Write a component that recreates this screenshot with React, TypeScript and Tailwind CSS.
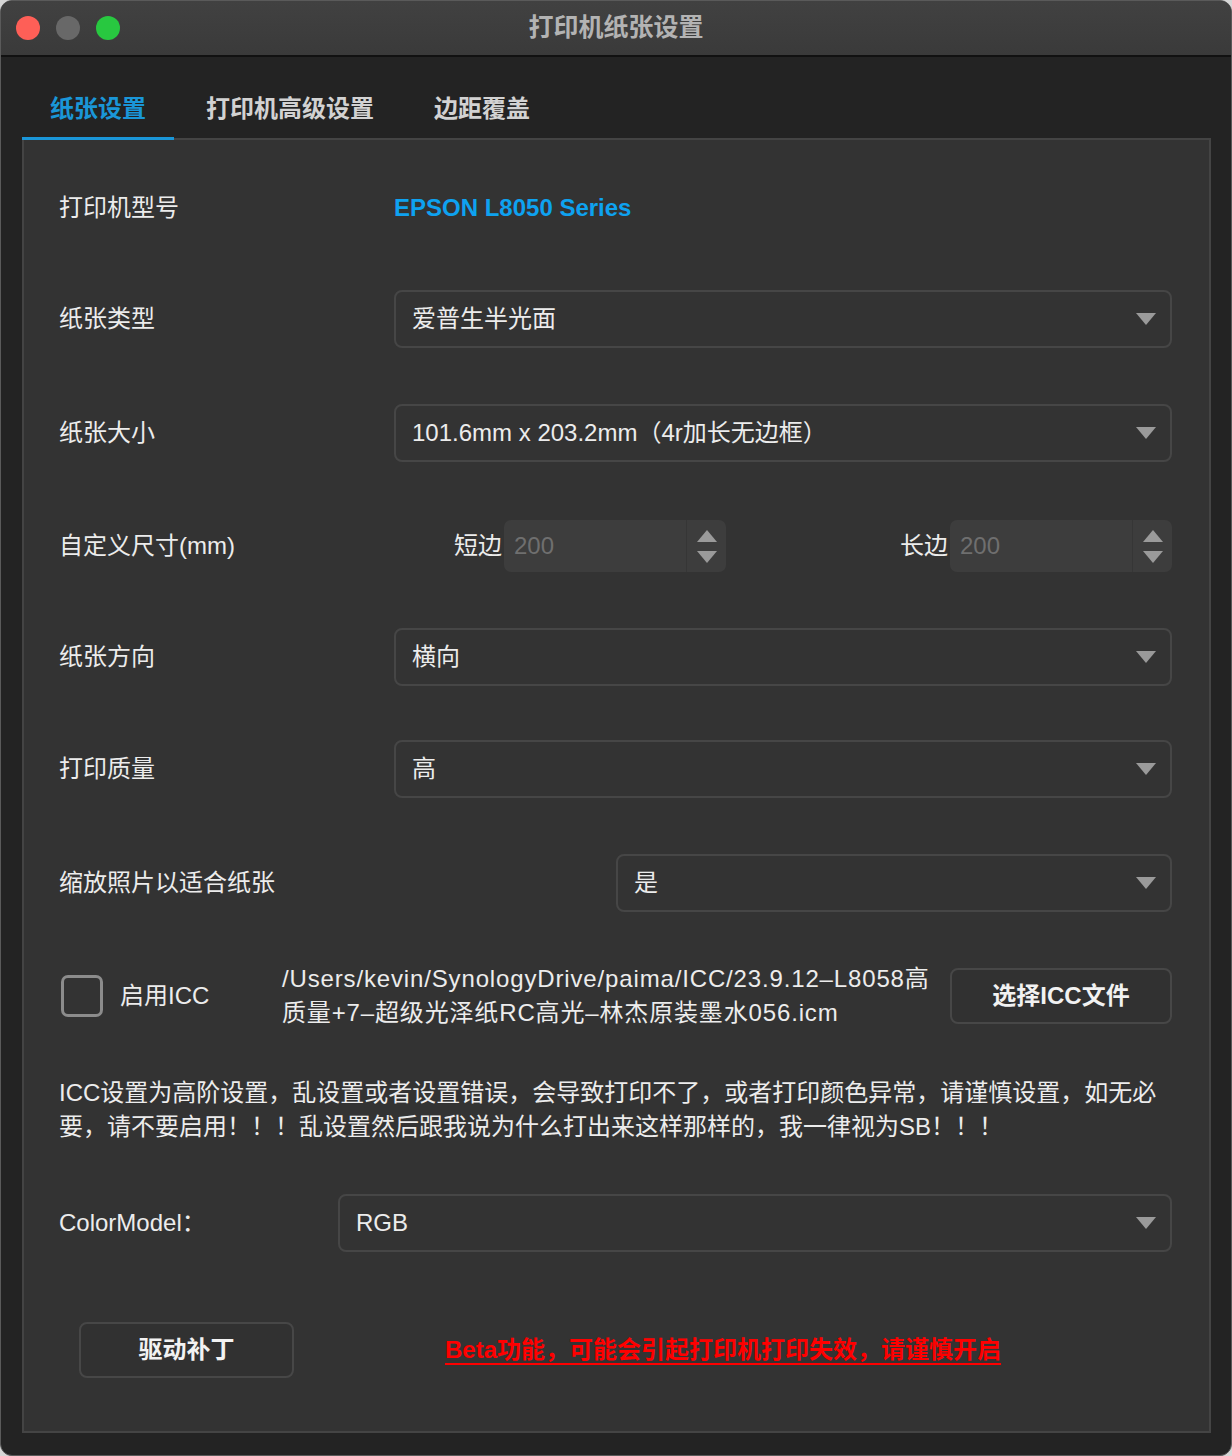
import React, { useState } from 'react';

const FONT = '"Liberation Sans", "Noto Sans CJK SC", sans-serif';

const Caret: React.FC = () => (
  <svg width="20" height="12" viewBox="0 0 20 12" className="shrink-0">
    <path d="M0 0 H20 L10 12 Z" fill="#9a9a9a" />
  </svg>
);

const Select: React.FC<{ value: string; className?: string }> = ({ value, className }) => (
  <div
    className={`flex h-[58px] items-center justify-between rounded-[8px] border-2 border-[#464646] bg-[#333333] pl-[16px] pr-[14px] ${className ?? ''}`}
  >
    <span className="text-[24px] text-[#ececec]">{value}</span>
    <Caret />
  </div>
);

const SpinBox: React.FC<{ label: string; value: string }> = ({ label, value }) => (
  <div className="flex items-center">
    <span className="mr-[2px] text-[24px] text-[#ececec]">{label}</span>
    <div className="flex h-[52px] w-[222px] items-center rounded-[7px] bg-[#3d3d3d]">
      <span className="flex-1 pl-[10px] text-[24px] text-[#6f6f6f]">{value}</span>
      <div className="flex h-full w-[40px] flex-col items-center justify-center gap-[9px] border-l border-[#363636]">
        <svg width="20" height="12" viewBox="0 0 20 12">
          <path d="M10 0 L20 12 H0 Z" fill="#9a9a9a" />
        </svg>
        <svg width="20" height="12" viewBox="0 0 20 12">
          <path d="M0 0 H20 L10 12 Z" fill="#9a9a9a" />
        </svg>
      </div>
    </div>
  </div>
);

const Label: React.FC<{ text: string; width?: string }> = ({ text, width = 'w-[335px]' }) => (
  <div className={`${width} shrink-0 text-[24px] text-[#ececec]`}>{text}</div>
);

const tabs = ['纸张设置', '打印机高级设置', '边距覆盖'];

const App: React.FC = () => {
  const [active, setActive] = useState(0);
  const [useIcc, setUseIcc] = useState(false);

  return (
    <div className="h-[1456px] w-[1232px] bg-[#d6d6d6]" style={{ fontFamily: FONT }}>
      <div className="flex h-full w-full flex-col overflow-hidden rounded-[12px] border border-[#5a5a5a] bg-[#232323]">
        {/* title bar */}
        <div className="relative flex h-[56px] shrink-0 items-center border-b-2 border-[#111111] bg-gradient-to-b from-[#414141] to-[#3a3a3a]">
          <div className="flex items-center gap-[16px] pl-[15px]">
            <span className="h-[24px] w-[24px] rounded-full bg-[#fe5f57]" />
            <span className="h-[24px] w-[24px] rounded-full bg-[#686868]" />
            <span className="h-[24px] w-[24px] rounded-full bg-[#28c840]" />
          </div>
          <div className="absolute inset-0 flex items-center justify-center text-[25px] font-bold text-[#b3b3b3]">
            打印机纸张设置
          </div>
        </div>

        {/* tabs */}
        <div className="relative z-10 -mb-[2px] flex pl-[21px] pt-[24px]">
          {tabs.map((t, i) => (
            <button
              key={t}
              onClick={() => setActive(i)}
              className={`flex h-[59px] items-center border-b-[3px] text-[24px] font-bold ${
                i === active ? 'border-[#1a96d8] text-[#1a96d8]' : 'border-transparent text-[#d2d2d2]'
              } ${i === 0 ? 'px-[28px]' : i === 1 ? 'pl-[32px] pr-[31px]' : 'pl-[29px] pr-[28px]'}`}
            >
              {t}
            </button>
          ))}
        </div>

        {/* panel */}
        <div className="ml-[21px] mr-[20px] flex flex-col border-2 border-[#444444] bg-[#333333] pl-[35px] pr-[37px] pt-[39px] pb-[53px]">
          <div className="flex h-[58px] items-center">
            <Label text="打印机型号" />
            <span className="text-[24px] font-bold text-[#0ea2f0]">EPSON L8050 Series</span>
          </div>

          <div className="mt-[53px] flex items-center">
            <Label text="纸张类型" />
            <Select value="爱普生半光面" className="flex-1" />
          </div>

          <div className="mt-[56px] flex items-center">
            <Label text="纸张大小" />
            <Select value="101.6mm x 203.2mm（4r加长无边框）" className="flex-1" />
          </div>

          <div className="mt-[55px] flex h-[58px] items-center">
            <Label text="自定义尺寸(mm)" />
            <div className="flex w-[332px] shrink-0 justify-end">
              <SpinBox label="短边" value="200" />
            </div>
            <div className="flex flex-1 justify-end">
              <SpinBox label="长边" value="200" />
            </div>
          </div>

          <div className="mt-[53px] flex items-center">
            <Label text="纸张方向" />
            <Select value="横向" className="flex-1" />
          </div>

          <div className="mt-[54px] flex items-center">
            <Label text="打印质量" />
            <Select value="高" className="flex-1" />
          </div>

          <div className="mt-[56px] flex items-center">
            <Label text="缩放照片以适合纸张" width="w-[557px]" />
            <Select value="是" className="flex-1" />
          </div>

          {/* ICC profile */}
          <div className="mt-[56px] flex h-[56px] items-center">
            <button
              onClick={() => setUseIcc(!useIcc)}
              className="ml-[2px] h-[42px] w-[42px] shrink-0 rounded-[7px] border-[3px] border-[#8c8c8c]"
            />
            <span className="ml-[17px] w-[162px] shrink-0 text-[24px] text-[#ececec]">启用ICC</span>
            <div className="w-[668px] shrink-0 text-[24px] leading-[34px] tracking-[0.85px] text-[#ececec]">
              /Users/kevin/SynologyDrive/paima/ICC/23.9.12–L8058高
              <br />
              质量+7–超级光泽纸RC高光–林杰原装墨水056.icm
            </div>
            <button className="flex h-[56px] flex-1 items-center justify-center rounded-[8px] border-2 border-[#474747] bg-[#313131] text-[24px] font-bold text-[#f2f2f2]">
              选择ICC文件
            </button>
          </div>

          <p className="mt-[52px] text-[24px] leading-[34px] text-[#ececec]">
            ICC设置为高阶设置，乱设置或者设置错误，会导致打印不了，或者打印颜色异常，请谨慎设置，如无必
            <br />
            要，请不要启用！！！乱设置然后跟我说为什么打出来这样那样的，我一律视为SB！！！
          </p>

          <div className="mt-[50px] flex items-center">
            <Label text="ColorModel：" width="w-[279px]" />
            <Select value="RGB" className="flex-1" />
          </div>

          <div className="mt-[70px] flex items-center">
            <button className="ml-[20px] flex h-[56px] w-[215px] items-center justify-center rounded-[8px] border-2 border-[#474747] bg-[#313131] text-[24px] font-bold text-[#f2f2f2]">
              驱动补丁
            </button>
            <a className="ml-[151px] text-[24px] font-bold text-[#ff0000] underline decoration-2 underline-offset-[5px]">
              Beta功能，可能会引起打印机打印失效，请谨慎开启
            </a>
          </div>
        </div>
      </div>
    </div>
  );
};

export default App;
